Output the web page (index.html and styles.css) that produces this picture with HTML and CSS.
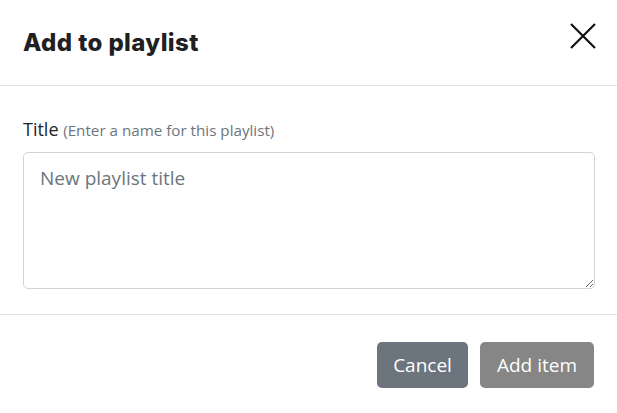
FILE: index.html
```html
<!DOCTYPE html>
<html>
<head>
<meta charset="utf-8">
<link rel="stylesheet" href="styles.css">
</head>
<body>
<div class="modal">
  <div class="modal-header">
    <h2 class="modal-title">Add to playlist</h2>
    <button class="close" aria-label="Close">
      <svg width="28" height="28" viewBox="0 0 28 28"><path d="M2 2 L26 26 M26 2 L2 26" stroke="#111" stroke-width="2.2" fill="none"/></svg>
    </button>
  </div>
  <div class="modal-body">
    <label class="label">Title <small class="hint">(Enter a name for this playlist)</small></label>
    <textarea class="input" placeholder="New playlist title"></textarea>
  </div>
  <div class="modal-footer">
    <button class="btn btn-cancel">Cancel</button>
    <button class="btn btn-add">Add item</button>
  </div>
</div>
</body>
</html>
```
FILE: styles.css
```css
html, body { margin: 0; padding: 0; background: #fff; }
body { font-family: "Open Sans", "Noto Sans", sans-serif; color: #212529; }
.modal { width: 617px; }
.modal-header {
  height: 86px;
  box-sizing: border-box;
  border-bottom: 1px solid #dee2e6;
  display: flex;
  align-items: center;
  justify-content: space-between;
  padding: 0 20px 0 23px;
}
.modal-title {
  margin: 0;
  font-family: "Inter", sans-serif;
  font-weight: 800;
  font-size: 24px;
  color: #1f1f24;
  letter-spacing: 0.4px;
}
.close {
  background: none; border: 0; padding: 0; margin: 0 0 13px 0;
  width: 28px; height: 28px; display: flex; cursor: pointer;
}
.modal-body { padding: 30px 22px 25px 23px; display: flex; flex-direction: column; }
.label { font-size: 18px; color: #212529; line-height: 26px; margin-bottom: 9px; }
.hint { font-size: 15.2px; color: #6c757d; }
.input {
  box-sizing: border-box;
  width: 572px;
  height: 137px;
  border: 1px solid #ced4da;
  border-radius: 5px;
  padding: 12px 16px;
  font-family: "Open Sans", sans-serif;
  font-size: 19px;
  resize: vertical;
  outline: none;
}
.input::placeholder { color: #6c757d; }
.modal-footer {
  border-top: 1px solid #dee2e6;
  display: flex;
  justify-content: flex-end;
  gap: 12px;
  padding: 27px 23px 0 0;
}
.btn {
  height: 46px;
  border: 0;
  border-radius: 5px;
  color: #fff;
  font-family: "Open Sans", sans-serif;
  font-size: 19px;
  padding: 0;
}
.btn-cancel { background: #6c757d; width: 91px; }
.btn-add { background: #868686; width: 114px; }
```
